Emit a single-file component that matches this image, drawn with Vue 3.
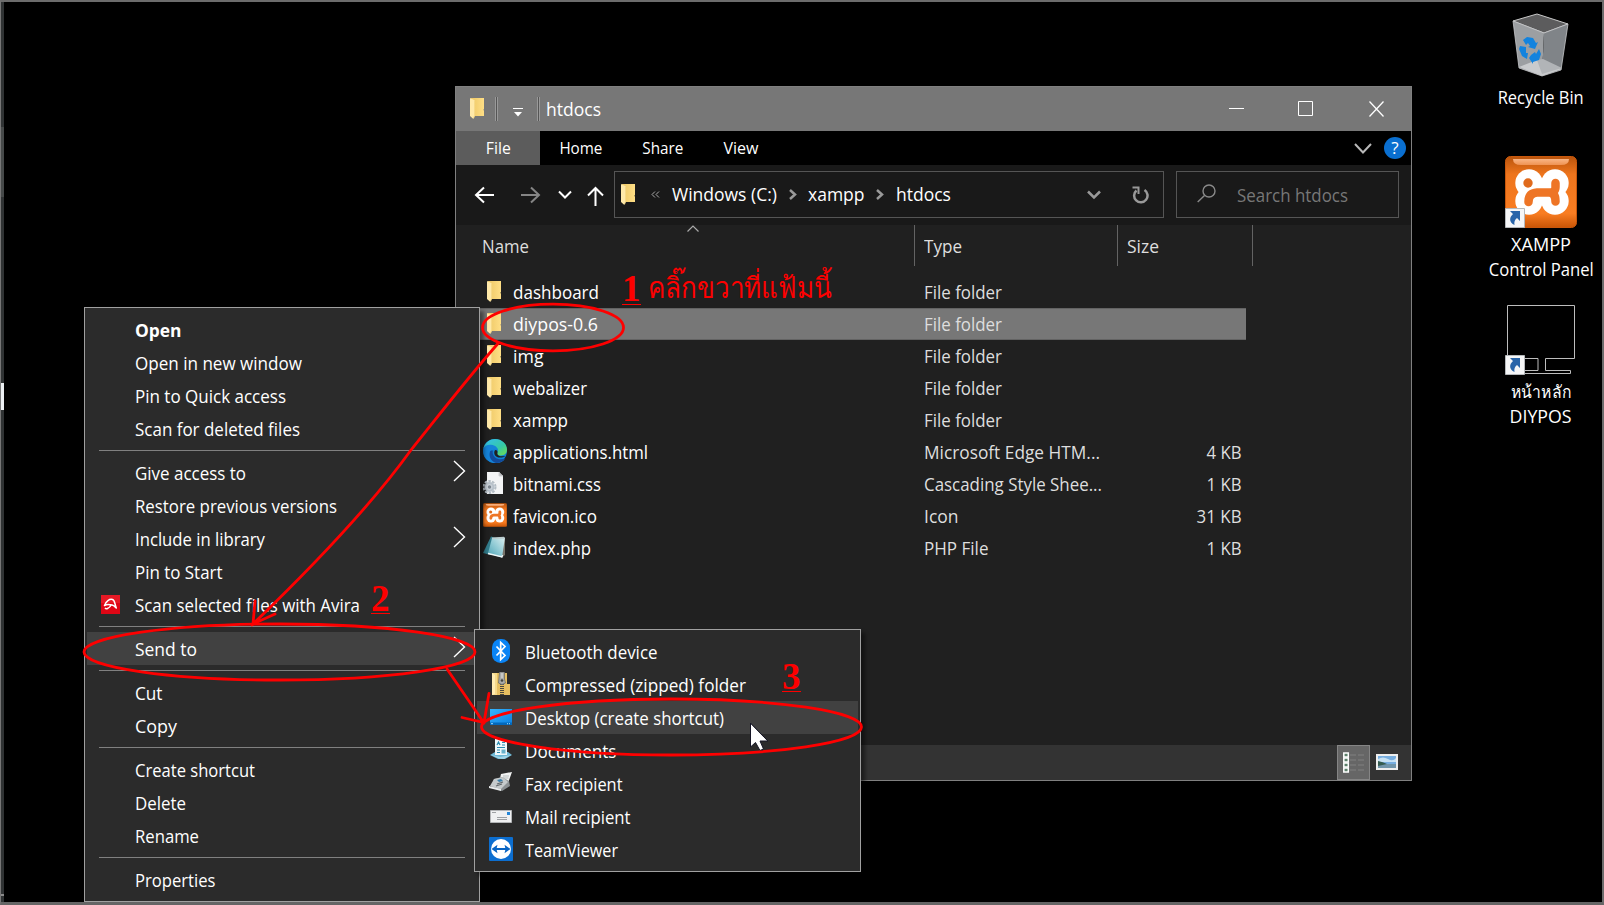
<script setup>
const tabs = [
  { t: 'File', w: 25, cls: 'file' },
  { t: 'Home', w: 43, cls: '' },
  { t: 'Share', w: 41, cls: '' },
  { t: 'View', w: 35, cls: '' }
]
const rows = [
  { icon: 'folder', n: 'dashboard', w: 86, type: 'File folder', tw: 78, size: '', sw: 0 },
  { icon: 'folder', n: 'diypos-0.6', w: 85, type: 'File folder', tw: 78, size: '', sw: 0, sel: true },
  { icon: 'folder', n: 'img', w: 30.5, type: 'File folder', tw: 78, size: '', sw: 0 },
  { icon: 'folder', n: 'webalizer', w: 74, type: 'File folder', tw: 78, size: '', sw: 0 },
  { icon: 'folder', n: 'xampp', w: 55, type: 'File folder', tw: 78, size: '', sw: 0 },
  { icon: 'edge', n: 'applications.html', w: 135, type: 'Microsoft Edge HTM...', tw: 176, size: '4 KB', sw: 35 },
  { icon: 'css', n: 'bitnami.css', w: 88, type: 'Cascading Style Shee...', tw: 178, size: '1 KB', sw: 35 },
  { icon: 'xampp', n: 'favicon.ico', w: 84, type: 'Icon', tw: 34.5, size: '31 KB', sw: 45 },
  { icon: 'php', n: 'index.php', w: 78, type: 'PHP File', tw: 64.5, size: '1 KB', sw: 35 }
]
const groups = [
  [{ t: 'Open', w: 46.5, bold: true }, { t: 'Open in new window', w: 167 }, { t: 'Pin to Quick access', w: 151 }, { t: 'Scan for deleted files', w: 165 }],
  [{ t: 'Give access to', w: 111, arrow: true }, { t: 'Restore previous versions', w: 202 }, { t: 'Include in library', w: 130, arrow: true }, { t: 'Pin to Start', w: 87.5 }, { t: 'Scan selected files with Avira', w: 225, avira: true }],
  [{ t: 'Send to', w: 62, arrow: true, hot: true }],
  [{ t: 'Cut', w: 27.5 }, { t: 'Copy', w: 42 }],
  [{ t: 'Create shortcut', w: 120 }, { t: 'Delete', w: 51 }, { t: 'Rename', w: 64 }],
  [{ t: 'Properties', w: 80.5 }]
]
const targets = [
  { icon: 'bt', t: 'Bluetooth device', w: 132.5 },
  { icon: 'zip', t: 'Compressed (zipped) folder', w: 221 },
  { icon: 'desk', t: 'Desktop (create shortcut)', w: 199, hot: true },
  { icon: 'docs', t: 'Documents', w: 91.5 },
  { icon: 'fax', t: 'Fax recipient', w: 97.5 },
  { icon: 'mail', t: 'Mail recipient', w: 105.5 },
  { icon: 'tv', t: 'TeamViewer', w: 93 }
]
/* Condenses a label horizontally to a given width */
const vFit = {
  mounted(el, { value }) {
    if (value && el.offsetWidth) el.style.transform = `scaleX(${value / el.getBoundingClientRect().width})`
  }
}
</script>

<template>
  <div class="desktop">
    <svg width="0" height="0" class="defs" aria-hidden="true">
      <defs>
        <linearGradient id="gf" x1="0" x2="1"><stop offset="0" stop-color="#edc765" /><stop offset="1" stop-color="#ffdf86" /></linearGradient>
        <linearGradient id="ga" x1="0" x2="1" y1="0" y2="1"><stop offset="0" stop-color="#35bdf2" /><stop offset=".6" stop-color="#35c9a5" /><stop offset="1" stop-color="#72df4b" /></linearGradient>
        <linearGradient id="go" x1="0" x2="0" y1="0" y2="1"><stop offset="0" stop-color="#b9540c" /><stop offset=".25" stop-color="#ee751d" /><stop offset=".8" stop-color="#f97d22" /><stop offset="1" stop-color="#c95506" /></linearGradient>
        <linearGradient id="gs" x1="0" x2="0" y1="0" y2="1"><stop offset="0" stop-color="#f9b585" /><stop offset="1" stop-color="#ef9353" /></linearGradient>
        <linearGradient id="gp" x1="0" x2="1" y1="1" y2="0"><stop offset="0" stop-color="#4aa2b4" /><stop offset=".5" stop-color="#91cbd5" /><stop offset="1" stop-color="#ddeff0" /></linearGradient>
        <linearGradient id="gd" x1="0" x2="1" y1="0" y2="1"><stop offset="0" stop-color="#35b4ff" /><stop offset="1" stop-color="#0b7fe0" /></linearGradient>
        <symbol id="folder" viewBox="0 0 14 21"><path d="M1 0h13v11l-.6.8.6.9V18H3z" fill="url(#gf)" /><path d="M0 0l4.600 2.200v15.300L3.400 21 0 18z" fill="#ffe9a9" /><path d="M4.600 3v14.500L3.600 20" stroke="#f6d987" fill="none" /></symbol>
        <symbol id="edge" viewBox="0 0 24 24"><circle cx="12" cy="12" r="12" fill="#0f7fd3" /><path d="M.4 9C2.500 3 7 0 12 0c7 0 12 5 12 10.600 0 4.200-3 5.900-5.800 5.900-3.400 0-4.700-1.400-3.700-3.100C16 10.500 13.500 8 10 8 6 8 2.500 8.500.4 9z" fill="url(#ga)" /><path d="M.2 10C1.500 7 4.500 5.500 8 5.800c4.500.3 7 3.200 7 5.700-1.200-1.600-4-1.600-5.600.2-2 2.400-.8 7.300 3.600 9.500 3 1.400 6.500.8 9-1C19.500 23 16 24.200 12 24 5 23.700-.6 17.500.2 10z" fill="#1583d8" /><path d="M7 12.500c-1.500 5.500 1 9.500 6 11.500 4 0 7.500-1.600 9.500-4.800-3.500 1.700-8 1.500-10.600-1-2.100-2-2.600-4.500-2-6.700C9 11.500 7.800 11 7 12.500z" fill="#114a9b" /><path d="M11.500 12c-1 3 1 6.500 5.500 6.600 2 0 4-.4 5.500-1.600-4 1-9-.2-8-3.600.4-1.500-2-3.500-3-1.400z" fill="#202020" /></symbol>
        <symbol id="css" viewBox="0 0 24 24"><path d="M4 1h12l4 4v18H4z" fill="#f3f4f5" /><path d="M16 1v4h4" fill="#b8babd" stroke="#d2d3d5" /><circle cx="6.500" cy="16" r="6" fill="none" stroke="#b4bdc5" stroke-width="2" stroke-dasharray="2.500 1.270" /><circle cx="6.500" cy="16" r="4" fill="#cad1d8" stroke="#b7c0c9" stroke-width="2" /><circle cx="6.500" cy="16" r="1.700" fill="#7a848d" /></symbol>
        <symbol id="xampp" viewBox="0 0 72 72"><rect x=".5" y=".5" width="71" height="71" rx="5" fill="url(#go)" stroke="#c9570b" /><path d="M8 3h56q0 6-8 6H16Q8 9 8 3z" fill="url(#gs)" /><g fill="#fff"><circle cx="24" cy="27" r="13.700" /><circle cx="50" cy="27" r="13.700" /><circle cx="24" cy="45" r="13.700" /><circle cx="50" cy="45" r="13.700" /><path d="M28 25h18v22H28z" /></g><circle cx="23" cy="27" r="4.700" fill="#e06a1c" /><path d="M50.500 27v4q0 5.500-6 5.500H32Q23.500 37 23.500 46M44 36.500q6.500 0 6.500 9" fill="none" stroke="#ee7526" stroke-width="8.500" stroke-linecap="round" /></symbol>
        <symbol id="php" viewBox="0 0 24 24"><path d="M17 3l5 0v17l-4 3z" fill="#77736a" /><path d="M8 1.500L0 18l8 2 11-15z" fill="#327c8b" /><path d="M9 3l13-.5-3 20L5 18.500z" fill="url(#gp)" /><path d="M9 2.500l12-.8.5 2L9 4z" fill="#bccdcf" /><path d="M5 18.500l14 3.500.5-2" fill="none" stroke="#eef6f6" stroke-width="1.300" /></symbol>
        <symbol id="bt" viewBox="0 0 24 24"><rect x="3" y="0" width="18" height="24" rx="8.500" fill="#0a84f5" /><path d="M7.500 7.500l8.500 9-4.300 4V3.500L16 7.500l-8.500 9" fill="none" stroke="#fff" stroke-width="1.700" /></symbol>
        <symbol id="zip" viewBox="0 0 24 24"><path d="M3 1h8v22H3z" fill="#f5d98a" /><path d="M8 1h10v11h3v11H8z" fill="#e7bf61" /><path d="M3 1l3 2v19l-3 1z" fill="#ffebb1" /><path d="M13 8v15" stroke="#4e4a3e" stroke-width="4" stroke-dasharray="1 1" /><path d="M10.500 0h5v7l1 4q-3.500 3-7 0z" fill="#aaaba9" stroke="#62635f" stroke-width=".7" /><circle cx="13" cy="8.500" r="1.300" fill="#41433f" /><path d="M13 1v5" stroke="#e3e5e2" /></symbol>
        <symbol id="desk" viewBox="0 0 24 24"><path d="M1 4h22v16H1z" fill="url(#gd)" /><path d="M1 17.500h22V20H1z" fill="#0368bb" /><path d="M2 18.700h2m14 0h1m1 0h1" stroke="#9dddff" /></symbol>
        <symbol id="docs" viewBox="0 0 24 24"><path d="M1 17l5-3h13l4 3-7 4H9z" fill="#6db8d6" /><path d="M2 17l9 2 11-2-7 4-5-.5z" fill="#a5d7e8" /><path d="M6 1h8l4 3v13H6z" fill="#eef8fa" /><path d="M8 7l1.500-3L11 7M13 4.500h3M13 7h3M8 9.500h8M8 12h3M8 14.500h3" fill="none" stroke="#2a8ab0" stroke-width="1.200" /><path d="M12.500 11.500h4v4h-4z" fill="#69b2cc" /></symbol>
        <symbol id="fax" viewBox="0 0 24 24"><path d="M12 3l11-2-4 11-9 0z" fill="#f2f3f3" /><path d="M5 8l8-2 7 4 1 5-8 5-11-4z" fill="#8b9093" /><path d="M5 8l9-2 5 5-7 7-11-3z" fill="#c5cacc" /><path d="M8 9l4-1 2 2-4 1z" fill="#397eaa" /><path d="M8 13l6-2M7 15l6-2" stroke="#62686c" stroke-width="1.200" /><path d="M0 15l12 3v2L0 17z" fill="#e9eced" /><path d="M14 5h6M13.500 7h6" stroke="#b5bbbc" /></symbol>
        <symbol id="mail" viewBox="0 0 24 24"><path d="M1.500 6.500h21v12h-21z" fill="#eff0f1" stroke="#b2b4b6" /><path d="M18 8h3v3h-3z" fill="#2385d7" /><path d="M3 8.500h4M8 13.500h10M8 15.500h10" stroke="#9da0a3" /></symbol>
        <symbol id="tv" viewBox="0 0 24 24"><rect width="24" height="24" rx="1" fill="#0c6ed0" /><circle cx="12" cy="12" r="10" fill="#fff" /><path d="M2.500 12l6-4.200-.8 3.200h8.600l-.8-3.200 6 4.200-6 4.200.8-3.200H7.700l.8 3.200z" fill="#0864c3" /></symbol>
        <symbol id="cut" viewBox="0 0 20 20"><path d="M.5.500h19v19H.5z" fill="#f5f6f7" stroke="#b5b8bb" /><path d="M5 3h10v10l-3-3c-2.500 2-3 4-2.500 7C4 14.500 4 9.500 8 6z" fill="#2864a9" /></symbol>
      </defs>
    </svg>

    <i class="edge-strip" /><i class="edge-light" /><i class="edge-white" /><i class="edge-tick" />

    <div class="shortcut s1">
      <svg class="bin" width="58" height="66" viewBox="0 0 58 66">
        <path d="M1 8L25 1l31 10-24 9z" fill="#5c5c5d" stroke="#c8c8c8" />
        <path d="M1 8l31 12-2 43-23-8z" fill="#9c9fa2" /><path d="M32 20l24-9-7 46-19 6z" fill="#808488" />
        <path d="M7 54l18-7 25 9-20 7z" fill="#c9cbcd" /><path d="M25 47l6-1 19 9-20 6z" fill="#b1b4b7" />
        <path d="M1 8l31 12 24-9M1 8l6 47 23 8 19-6 7-46" fill="none" stroke="#c6c8ca" stroke-width=".8" />
        <path d="M11 27l4-3 6 1 3 5 2-1-3 7-7-2 2-1-2-3-2 2zM8 33l6 1 0 6 2 0-1 6-5-3-3-7zM19 42l4-3 1 2 3-5 2 5-2 6-6 2 0 2-4-6 2-3z" fill="#1283de" />
      </svg>
      <span v-fit="86">Recycle Bin</span>
    </div>
    <div class="shortcut s2">
      <div class="pic"><svg width="72" height="72"><use href="#xampp" /></svg><svg class="link" width="20" height="20"><use href="#cut" /></svg></div>
      <span v-fit="60">XAMPP</span><span v-fit="105">Control Panel</span>
    </div>
    <div class="shortcut s3">
      <div class="pic"><svg width="72" height="72" viewBox="0 0 72 72" fill="none" stroke="#bdbdbd"><path d="M2.500 54V2.500h67v53h-29v12h25v3H18M18 55.500h15v12H18" /></svg><svg class="link" width="20" height="20"><use href="#cut" /></svg></div>
      <span v-fit="61">หน้าหลัก</span><span v-fit="62">DIYPOS</span>
    </div>

    <section class="window">
      <header class="title">
        <svg width="14" height="21"><use href="#folder" /></svg><i class="grip g1" />
        <svg class="quick" width="10" height="9" viewBox="0 0 10 9"><path d="M1 4h8L5 8.500z" fill="#fff" /><path d="M0 .5h10" stroke="#fff" /></svg><i class="grip g2" />
        <span v-fit="55">htdocs</span>
        <svg class="wbtns" width="156" height="16" viewBox="0 0 156 16" fill="none" stroke="#fff"><path d="M0 7.500h15M69.500.500h14v14h-14z" /><path d="M140.500.500l14 15m0-15l-14 15" stroke-width="1.300" /></svg>
      </header>
      <nav class="tabs">
        <div v-for="t in tabs" :key="t.t" class="tab" :class="t.cls"><span v-fit="t.w">{{ t.t }}</span></div>
        <svg class="collapse" width="18" height="11" viewBox="0 0 18 11"><path d="M1 1l8 8.500L17 1" fill="none" stroke="#b8b8b8" stroke-width="2" /></svg>
        <div class="help">?</div>
      </nav>
      <div class="address">
        <svg class="arrows" width="130" height="20" viewBox="0 0 130 20" fill="none" stroke="#fff" stroke-width="2">
          <path d="M20 10H2m8-7.500L2 10l8 7.500" /><path d="M47 10h18m-8-7.500l8 7.500-8 7.500" stroke="#858585" /><path d="M85 6.500l6 6 6-6" /><path d="M121.500 21V3m-7.500 7.500L121.500 3l7.500 7.500" />
        </svg>
        <div class="path">
          <svg width="14" height="21"><use href="#folder" /></svg>
          <svg class="back" width="9" height="7" viewBox="0 0 9 7" fill="none" stroke="#aaa"><path d="M4 .5l-3 3 3 3M8 .5l-3 3 3 3" /></svg>
          <span class="c1" v-fit="105">Windows (C:)</span>
          <svg class="sep" width="8" height="11" viewBox="0 0 8 11" fill="none" stroke="#999" stroke-width="2.500"><path d="M1 1l5 4.500L1 10" /></svg>
          <span class="c2" v-fit="56">xampp</span>
          <svg class="sep" width="8" height="11" viewBox="0 0 8 11" fill="none" stroke="#999" stroke-width="2.500"><path d="M1 1l5 4.500L1 10" /></svg>
          <span class="c3" v-fit="55">htdocs</span>
          <svg class="drop" width="14" height="10" viewBox="0 0 14 10" fill="none" stroke="#999" stroke-width="2.500"><path d="M1 1.500l6 6 6-6" /></svg>
          <svg class="reload" width="17" height="18" viewBox="0 0 17 18" fill="none" stroke="#999" stroke-width="2.500"><path d="M4.500 4.500a6.700 6.700 0 1 0 8-.5" /><path d="M.5 1.500h6V8" stroke-width="2" /></svg>
        </div>
        <div class="search">
          <svg width="19" height="19" viewBox="0 0 19 19" fill="none" stroke="#8a8a8a" stroke-width="1.400"><circle cx="12" cy="7" r="6" /><path d="M7.500 11.500L.7 18" /></svg>
          <span v-fit="111">Search htdocs</span>
        </div>
      </div>
      <div class="thead">
        <svg class="sort" width="12" height="7" viewBox="0 0 12 7" fill="none" stroke="#aaa" stroke-width="1.200"><path d="M.5 6.500L6 1l5.500 5.500" /></svg>
        <div class="th n"><span v-fit="47">Name</span></div><div class="th t"><span v-fit="38">Type</span></div><div class="th s"><span v-fit="32">Size</span></div>
      </div>
      <div class="files">
        <div v-for="r in rows" :key="r.n" class="row" :class="{ sel: r.sel }">
          <div class="ic"><svg v-if="r.icon === 'folder'" class="fold" width="14" height="21"><use href="#folder" /></svg><svg v-else width="24" height="24"><use :href="'#' + r.icon" /></svg></div>
          <div class="name"><span v-fit="r.w">{{ r.n }}</span></div>
          <div class="type"><span v-fit="r.tw">{{ r.type }}</span></div>
          <div class="size"><span v-fit="r.sw">{{ r.size }}</span></div>
        </div>
      </div>
      <footer class="status">
        <div class="view on"><svg width="22" height="22" viewBox="0 0 22 22"><path v-for="i in 4" :key="i" :d="`M.8 ${i * 5 - 4}h4.500v4h-4.500z`" fill="#5d806b" stroke="#fff" stroke-width="1.500" /><path d="M7 3h6m2 0h6M7 8h6m2 0h6M7 13h6m2 0h6M7 18h6m2 0h6" stroke="#808080" /></svg></div>
        <div class="view"><svg width="22" height="16" viewBox="0 0 22 16"><path d="M1 1h20v14H1z" fill="#77aee0" stroke="#eee" stroke-width="2" /><path d="M2 5q5-3 10 0t8-1v4H2z" fill="#c8e2f4" /><path d="M2 8q5 1 8 2l10 0v4H2z" fill="#7195aa" /><path d="M2 7q5 1 9 3l-9 2z" fill="#355c50" /></svg></div>
      </footer>
    </section>

    <div class="menu ctx">
      <div v-for="(g, i) in groups" :key="i" class="group">
        <div v-for="m in g" :key="m.t" class="item" :class="{ hot: m.hot, bold: m.bold }">
          <svg v-if="m.avira" class="avira" width="19" height="19" viewBox="0 0 19 19"><path d="M0 0h19v19H0z" fill="#df0615" /><path d="M0 0h19v8H0z" fill="#ee2b36" opacity=".5" /><path d="M3.500 10.500C5 6 8.500 3.800 11.500 4.500c2.500.8 2 4 3.800 8.500-2-2.500-4-3.500-6-3.300-2-.6-4-.3-5.800.8zM10.500 9.500q-1.500 3-4 4-1.500.7-2.500-.5" fill="none" stroke="#fff" stroke-width="1.500" stroke-linejoin="round" /></svg>
          <span v-fit="m.w">{{ m.t }}</span>
          <svg v-if="m.arrow" class="more" width="13" height="22" viewBox="0 0 13 22" fill="none" stroke="#fff" stroke-width="1.400"><path d="M1 1l10.500 10L1 21" /></svg>
        </div>
      </div>
    </div>

    <div class="menu sub">
      <div v-for="m in targets" :key="m.t" class="item" :class="{ hot: m.hot }">
        <svg class="mi" width="24" height="24"><use :href="'#' + m.icon" /></svg>
        <span v-fit="m.w">{{ m.t }}</span>
      </div>
    </div>

    <svg class="marks" width="1604" height="905" viewBox="0 0 1604 905" fill="none" stroke="#fe0000" stroke-width="2.800" stroke-linecap="round">
      <path d="M750.500 723.500v23.500l5-4.500 4.500 8 3.500-1.500-3.500-8h7.500z" fill="#fff" stroke="#151525" stroke-width="1" />
      <ellipse cx="553" cy="327.500" rx="70.500" ry="23.300" />
      <ellipse cx="279.500" cy="652" rx="195.500" ry="28" />
      <ellipse cx="671.500" cy="727" rx="190" ry="28" />
      <path d="M498 343.500C471 374 443 410 411 450C383 489 334 546 252 625M255 601l-2 23 22-10" />
      <path d="M447 669l37 54M462 717.500l22 5 5-29" />
      <g class="nums" fill="#fe0000" stroke="none">
        <text x="622" y="301">1</text><text x="371" y="611">2</text><text x="782" y="689">3</text>
        <text class="thai" x="648" y="298" textLength="184" lengthAdjust="spacingAndGlyphs">คลิ๊กขวาที่แฟ้มนี้</text>
      </g>
      <path d="M622 304.500h19M371 613.500h19M782 691.500h19" stroke-width="1" stroke-linecap="butt" />
    </svg>
    <i class="frame" />
  </div>
</template>

<style>
html, body { background: #000; overflow: hidden; }
</style>
<style scoped>
.desktop { position: relative; width: 1604px; height: 905px; background: #000; overflow: hidden; color: #fff; font-family: "Open Sans", "Noto Sans", sans-serif; font-size: 17.5px; line-height: 33px; }
.desktop * { box-sizing: border-box; }
.defs { position: absolute; }
svg { display: block; flex: none; }
span { display: inline-block; white-space: nowrap; transform-origin: left center; flex: none; }
.frame { position: absolute; inset: 0; border: 2px solid #6c6c6c; border-bottom: 3px solid #656565; border-left: 1px solid #777; }
.edge-strip, .edge-light, .edge-white, .edge-tick { position: absolute; left: 1px; width: 3px; }
.edge-strip { top: 1px; bottom: 2px; background: #303334; }
.edge-light { top: 127px; height: 70px; background: #464949; }
.edge-white { top: 383px; height: 27px; background: #eceff2; }
.edge-tick { top: 894px; height: 2px; background: #8a8a8a; }

.shortcut { position: absolute; left: 1481px; width: 120px; display: flex; flex-direction: column; align-items: center; line-height: 25px; }
.shortcut span { transform-origin: center; }
.s1 { top: 13px; }
.bin { margin-bottom: 6px; }
.s2 { top: 156px; }
.s3 { top: 303px; }
.pic { position: relative; margin-bottom: 4px; }
.link { position: absolute; left: 0; bottom: 0; }

.window { position: absolute; left: 455px; top: 86px; width: 957px; height: 695px; background: #202020; border: 1px solid #808080; display: flex; flex-direction: column; }
.title { height: 44px; background: #777; display: flex; align-items: center; padding-left: 14px; }
.title > svg:first-child { margin-top: -1px; }
.grip { width: 3px; height: 24px; border: 1px solid #999; border-width: 0 1px; background: #555; }
.g1 { margin-left: 11px; }
.g2 { margin-left: 14px; margin-right: 6px; }
.quick { margin: 7px 0 0 15px; }
.wbtns { margin-left: auto; margin-right: 26px; }
.tabs { height: 34px; background: #000; display: flex; align-items: center; font-size: 15.5px; position: relative; }
.tab { width: 82px; display: flex; justify-content: center; }
.tab span { transform-origin: center; }
.tab.file { width: 84px; background: #5c5c5c; height: 34px; line-height: 35px; }
.tab:nth-child(4) { width: 74px; }
.collapse { margin-left: auto; margin-right: 12px; }
.help { width: 22px; height: 22px; border-radius: 50%; background: #0a6fd0; text-align: center; line-height: 21px; font-size: 17px; margin-right: 5px; }
.address { height: 60px; background: #191919; display: flex; align-items: center; padding: 0 12px 0 18px; }
.arrows { overflow: visible; margin-top: -1px; }
.path { margin: -1px 0 0 10px; width: 550px; height: 47px; border: 1px solid #555; display: flex; align-items: center; padding-left: 6px; position: relative; }
.c1 { width: 105px; margin-left: 12px; }
.back { margin-left: 16px; }
.c2 { width: 56px; margin-left: 11px; }
.c1 + .sep { margin-left: 12px; }
.c2 + .sep { margin-left: 12px; }
.c3 { width: 55px; margin-left: 12px; }
.drop { margin-left: auto; margin-right: 31px; }
.reload { margin-right: 14px; }
.search { margin: -1px 0 0 auto; width: 223px; height: 47px; border: 1px solid #555; display: flex; align-items: center; padding-left: 20px; gap: 21px; color: #777; }
.search svg { margin-top: -2px; }
.search span { margin-top: 1px; }
.thead { display: flex; height: 41px; position: relative; color: #dedede; line-height: 43px; }
.sort { position: absolute; left: 231px; top: 0; }
.th { border-right: 1px solid #636363; }
.th.n { width: 459px; padding-left: 26px; }
.th.t { width: 203px; padding-left: 9px; }
.th.s { width: 135px; padding-left: 9px; }
.files { flex: 1; padding-top: 10px; }
.row { display: flex; height: 32px; width: 790px; line-height: 33px; }
.row.sel { background: #777; box-shadow: inset 0 1px #636363, inset 0 -1px #636363; }
.ic { width: 57px; padding: 3px 0 0 27px; }
.fold { margin: 2px 0 0 4px; }
.name { width: 411px; }
.type { width: 200px; color: #dedede; }
.size { flex: 1; text-align: right; padding-right: 4.500px; color: #dedede; }
.size span { transform-origin: right center; }
.status { height: 35px; background: #333; display: flex; justify-content: flex-end; padding-right: 8px; }
.view { width: 33px; display: flex; align-items: center; justify-content: center; padding-bottom: 2px; }
.view.on { background: #666; border: 1px solid #858585; padding: 0; }

.menu { position: absolute; background: #2b2b2b; border: 1px solid #a0a0a0; padding: 5px 2px; box-shadow: 4px 4px 4px rgba(0, 0, 0, .45); }
.ctx { left: 84px; top: 307px; width: 396px; height: 595px; }
.sub { left: 474px; top: 629px; width: 387px; height: 243px; }
.item { height: 33px; position: relative; padding-left: 48px; line-height: 34px; }
.item.hot { background: #414141; }
.item.bold { font-weight: 700; }
.group + .group { padding-top: 11px; background: linear-gradient(#808080, #808080) 12px 5px / 366px 1px no-repeat; }
.avira { position: absolute; left: 14px; top: 7px; }
.more { position: absolute; right: 11px; top: 4px; }
.mi { position: absolute; left: 12px; top: 4px; }
.marks { position: absolute; left: 0; top: 0; }
.nums { font: bold 37px "Liberation Serif", serif; }
.thai { font-size: 29px; font-weight: 500; }
</style>
